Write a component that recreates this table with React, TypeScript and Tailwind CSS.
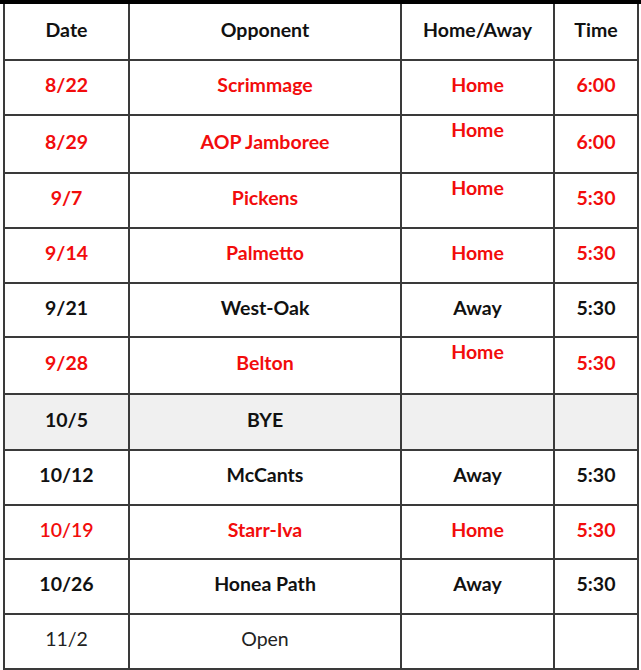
import React from 'react'

interface Game {
  date: string
  opponent: string
  site: string
  time: string
  h: number
  red?: boolean
  siteTop?: boolean
  bye?: boolean
  light?: boolean
  dateSemi?: boolean
}

const games: Game[] = [
  { date: '8/22', opponent: 'Scrimmage', site: 'Home', time: '6:00', h: 55, red: true },
  { date: '8/29', opponent: 'AOP Jamboree', site: 'Home', time: '6:00', h: 58, red: true, siteTop: true },
  { date: '9/7', opponent: 'Pickens', site: 'Home', time: '5:30', h: 55, red: true, siteTop: true },
  { date: '9/14', opponent: 'Palmetto', site: 'Home', time: '5:30', h: 55, red: true },
  { date: '9/21', opponent: 'West-Oak', site: 'Away', time: '5:30', h: 54 },
  { date: '9/28', opponent: 'Belton', site: 'Home', time: '5:30', h: 57, red: true, siteTop: true },
  { date: '10/5', opponent: 'BYE', site: '', time: '', h: 56, bye: true },
  { date: '10/12', opponent: 'McCants', site: 'Away', time: '5:30', h: 55 },
  { date: '10/19', opponent: 'Starr-Iva', site: 'Home', time: '5:30', h: 54, red: true, dateSemi: true },
  { date: '10/26', opponent: 'Honea Path', site: 'Away', time: '5:30', h: 55 },
  { date: '11/2', opponent: 'Open', site: '', time: '', h: 55, light: true },
]

const cell = 'flex justify-center border-r-2 border-[#3a3a3a]'

export default function App() {
  return (
    <div className="w-[641px] h-[670px] bg-white overflow-hidden" style={{ fontFamily: 'Lato, "Liberation Sans", sans-serif' }}>
      <div className="h-[4px] bg-black" />
      <div className="ml-[3px] w-[636px] border-l-2 border-[#3a3a3a] text-[19.5px] leading-[23px]">
        {/* header */}
        <div className="flex h-[57px] border-b-2 border-[#3a3a3a] font-bold text-[#111]">
          <div className={`${cell} w-[125px] items-center pb-[4px]`}>Date</div>
          <div className={`${cell} w-[272px] items-center pb-[4px]`}>Opponent</div>
          <div className={`${cell} w-[153px] items-center pb-[4px]`}>Home/Away</div>
          <div className={`${cell} w-[84px] items-center pb-[4px]`}>Time</div>
        </div>

        {games.map((g) => {
          const color = g.red ? 'text-[#f20c0c]' : g.light ? 'text-[#222]' : 'text-[#111]'
          const weight = g.light ? 'font-normal' : 'font-bold'
          return (
            <div
              key={g.date}
              className={`flex border-b-2 border-[#3a3a3a] ${color} ${weight} ${g.bye ? 'bg-[#f0f0f0]' : 'bg-white'}`}
              style={{ height: g.h }}
            >
              <div className={`${cell} w-[125px] items-center pb-[6px] ${g.dateSemi ? 'font-semibold' : ''}`}>{g.date}</div>
              <div className={`${cell} w-[272px] items-center pb-[6px]`}>{g.opponent}</div>
              <div className={`${cell} w-[153px] ${g.siteTop ? 'items-start pt-[2px]' : 'items-center pb-[6px]'}`}>{g.site}</div>
              <div className={`${cell} w-[84px] items-center pb-[6px]`}>{g.time}</div>
            </div>
          )
        })}
      </div>
    </div>
  )
}
